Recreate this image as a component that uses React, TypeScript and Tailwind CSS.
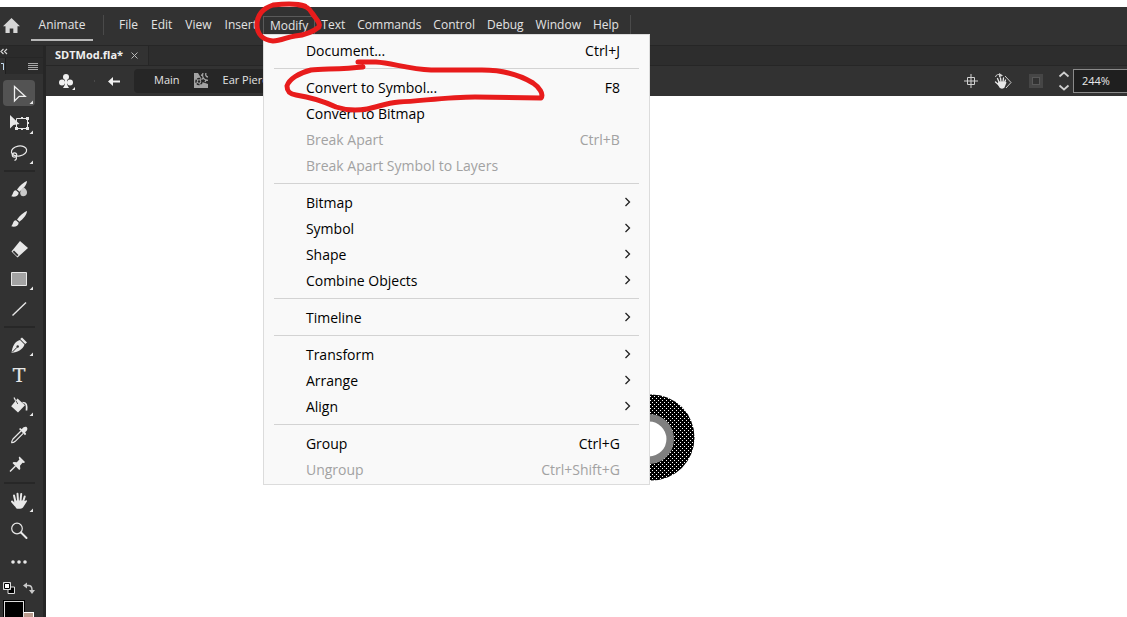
import { ReactNode } from "react"

type Entry = { label: string; keys?: string; sub?: boolean; disabled?: boolean }

const modifyMenu: Entry[][] = [
  [{ label: "Document...", keys: "Ctrl+J" }],
  [
    { label: "Convert to Symbol...", keys: "F8" },
    { label: "Convert to Bitmap" },
    { label: "Break Apart", keys: "Ctrl+B", disabled: true },
    { label: "Break Apart Symbol to Layers", disabled: true },
  ],
  [
    { label: "Bitmap", sub: true },
    { label: "Symbol", sub: true },
    { label: "Shape", sub: true },
    { label: "Combine Objects", sub: true },
  ],
  [{ label: "Timeline", sub: true }],
  [
    { label: "Transform", sub: true },
    { label: "Arrange", sub: true },
    { label: "Align", sub: true },
  ],
  [
    { label: "Group", keys: "Ctrl+G" },
    { label: "Ungroup", keys: "Ctrl+Shift+G", disabled: true },
  ],
]

type Tool = { name: string; icon: ReactNode; more?: boolean; selected?: boolean }

const brush = (
  <>
    <path d="M24 5c-3 1-7.500 5-10 8.500l2.500 2.200C20 13 24 8.500 24 5z" fill="#e8e8e8" />
    <path d="M13 14.300c-3 0-2.500 3.500-4.700 6 3.500 1 7.200-.3 7.400-3.600z" fill="#e8e8e8" />
  </>
)

const toolGroups: Tool[][] = [
  [
    {
      name: "Selection",
      more: true,
      selected: true,
      icon: <path d="M11.500 6.500v14.500l4.700-4.700h6z" fill="none" stroke="#f0f0f0" strokeWidth="1.300" />,
    },
    {
      name: "Free Transform",
      more: true,
      icon: (
        <>
          <path d="M13.500 8.500h11v10h-11z" fill="none" stroke="#e8e8e8" strokeWidth="1" />
          <path d="M12 17h3v3h-3zM23 17h3v3h-3zM23 7h3v3h-3zM18 7h2v2h-2zM18 18h2v2h-2zM24 12h2v2h-2z" fill="#e8e8e8" />
          <path d="M7 5v13.500l3.500-3.500 6-1z" fill="#e8e8e8" />
        </>
      ),
    },
    {
      name: "Lasso",
      more: true,
      icon: (
        <g fill="none" stroke="#e8e8e8" strokeWidth="1.200">
          <ellipse cx="16" cy="11" rx="7.700" ry="5" transform="rotate(-10 16 11)" />
          <circle cx="11.500" cy="15" r="2.200" />
          <path d="M13 16.500c1 1.500.5 3-1.500 4" />
        </g>
      ),
    },
  ],
  [
    {
      name: "Fluid Brush",
      icon: (
        <>
          {brush}
          <path d="M21 11.500c-3 1.500-5 5-3 8 2 1.700 5.500.5 6-2.500.2-2.500-1-4-3-5.500z" fill="#c9c9c9" />
        </>
      ),
    },
    { name: "Classic Brush", icon: brush },
    {
      name: "Eraser",
      icon: (
        <>
          <path d="M17 5l8 7-10.500 9.500-6-6z" fill="#e8e8e8" />
          <path d="M11 14.500l4.500 4.500-1.300 1.300-4.500-4.500z" fill="#323232" />
        </>
      ),
    },
    {
      name: "Rectangle",
      more: true,
      icon: <path d="M8.500 6.500h15v13h-15z" fill="#a3a3a3" stroke="#e8e8e8" strokeWidth="1" />,
    },
    { name: "Line", icon: <path d="M9.500 19.500l13.500-13" stroke="#e8e8e8" strokeWidth="1.400" /> },
  ],
  [
    {
      name: "Pen",
      more: true,
      icon: (
        <>
          <path d="M17 8l4.500 4.500c-1.500 5-6.500 7.500-13 8.500C9.300 14.500 11.500 9.500 17 8z" fill="#e8e8e8" />
          <path d="M19 5.500l5 5-1.800 1.500-5-5z" fill="#e8e8e8" />
          <path d="M9 20.500l5-5.200" stroke="#323232" strokeWidth="1" />
          <circle cx="14.700" cy="14.500" r="1.200" fill="#323232" />
        </>
      ),
    },
    {
      name: "Text",
      icon: (
        <text x="16" y="20" textAnchor="middle" fontFamily="DejaVu Serif, serif" fontSize="19" fill="#e8e8e8" stroke="#e8e8e8" strokeWidth=".2">
          T
        </text>
      ),
    },
    {
      name: "Paint Bucket",
      more: true,
      icon: (
        <>
          <path d="M14.500 6.500l7.500 6.800-7 7.200-6.800-6.300z" fill="#e8e8e8" />
          <path d="M14.500 12.500L11 5.500" stroke="#e8e8e8" strokeWidth="1.300" />
          <path d="M19.500 10.500c4 0 4.500 2.500 4 8" fill="none" stroke="#e8e8e8" strokeWidth="1.700" />
          <path d="M12.800 8.500l2 3.500" stroke="#323232" strokeWidth=".8" />
        </>
      ),
    },
    {
      name: "Eyedropper",
      icon: (
        <>
          <path d="M18 9l-8 8c-1 1.500-1.500 2.500-1.300 3.700 1.500 0 2.500-.5 3.500-1.400l8-8" fill="none" stroke="#e8e8e8" strokeWidth="1.200" />
          <path d="M16 7l1.300-1 1.500 1.200C20.500 5 22.500 4.300 23.800 5.300c1.200 1.300.5 3.400-1.700 5l1.100 1.700-1.200 1.200z" fill="#e8e8e8" />
        </>
      ),
    },
    {
      name: "Asset Warp",
      icon: (
        <>
          <path d="M16.500 4.500l5.500 5.500-1 1-1.500-.3-2.500 3 .3 3.300-1.100 1L9.500 11l1.100-1 3.200.2 2.600-2.700-.7-1.800z" fill="#e8e8e8" />
          <path d="M12.500 14L7 19.500" stroke="#e8e8e8" strokeWidth="1.500" />
        </>
      ),
    },
  ],
  [
    {
      name: "Hand",
      more: true,
      icon: (
        <>
          <g stroke="#e8e8e8" strokeWidth="2" strokeLinecap="round" fill="none">
            <path d="M12.500 14L11 7.500M15 13l-.5-7.200M17.500 13l.7-7M20 14l1.700-5.500M12.500 17.500L9 13.500" />
          </g>
          <path d="M11.500 12.500h9.300L21.500 13l2-.8c.8.300.7 1 .2 1.500L20 19.500c-.8 1.300-5.500 2-7 .5l-2-4z" fill="#e8e8e8" />
        </>
      ),
    },
    {
      name: "Zoom",
      icon: (
        <g fill="none" stroke="#e8e8e8">
          <circle cx="14" cy="10.500" r="5.300" strokeWidth="1.200" />
          <path d="M18 14.500l5.500 5.500" strokeWidth="2" strokeLinecap="round" />
        </g>
      ),
    },
    {
      name: "Edit Toolbar",
      icon: (
        <g fill="#e8e8e8">
          <circle cx="10" cy="14" r="1.800" />
          <circle cx="16" cy="14" r="1.800" />
          <circle cx="22" cy="14" r="1.800" />
        </g>
      ),
    },
  ],
]

function ToolButton({ name, icon, more, selected }: Tool) {
  return (
    <button aria-label={name} className={`block h-[26px] w-8 rounded ${selected ? "bg-[#535353]" : ""}`}>
      <svg width="32" height="26" viewBox="0 0 32 26">
        {icon}
        {more && <path d="M30 20.500v3.500h-3.500z" fill="#e8e8e8" />}
      </svg>
    </button>
  )
}

function ToolPanel() {
  return (
    <aside className="flex w-[46px] shrink-0 flex-col overflow-hidden border-r-[3px] border-[#262626] bg-[#323232]">
      <div className="flex h-[11px] shrink-0 items-center bg-[#2b2b2b]">
        <button aria-label="Collapse panel">
          <svg width="9" height="7" viewBox="0 0 9 7" fill="none" stroke="#d6d6d6" strokeWidth="1.200">
            <path d="M3.500 1L1 3.500 3.500 6M7 1L4.500 3.500 7 6" />
          </svg>
        </button>
      </div>
      <div className="flex h-[17px] shrink-0 items-center justify-between border-t border-[#262626] bg-[#2b2b2b] pr-1">
        <span className="flex h-4 w-[6px] items-center overflow-hidden border-r border-[#1f1f1f] bg-[#323232]">
          <svg width="5" height="9" viewBox="0 0 5 9"><path d="M1 1.500h2.500V8" fill="none" stroke="#c4dcf0" /></svg>
        </span>
        <button aria-label="Panel menu">
          <svg width="11" height="9" viewBox="0 0 11 9" stroke="#a8a8a8">
            <path d="M0 1.500h10M0 3.500h10M0 5.500h10M0 7.500h10" />
          </svg>
        </button>
      </div>
      <div className="mt-[6px] shrink-0">
        {toolGroups.map((tools, i) => (
          <div key={i}>
            {i > 0 && <div className="mr-2 ml-1 h-[10px] py-1"><div className="h-0.5 bg-[#272727]" /></div>}
            <div className="flex flex-col gap-1 pl-[3px]">
              {tools.map((tool) => (
                <ToolButton key={tool.name} {...tool} />
              ))}
            </div>
          </div>
        ))}
      </div>
      <div className="mt-2 flex shrink-0 gap-2 pl-[3px]">
        <button aria-label="Default colors">
          <svg width="12" height="12" viewBox="0 0 12 12">
            <path d="M5 5h6.500v6.500H5z" fill="#000" stroke="#ddd" />
            <path d="M.5.5h7v7h-7z" fill="#fff" stroke="#ddd" />
            <path d="M1.500 1.500h5v5h-5z" fill="#fff" stroke="#000" />
          </svg>
        </button>
        <button aria-label="Swap colors">
          <svg width="12" height="12" viewBox="0 0 12 12">
            <path d="M3 3.500h2.500C8 3.500 9 5 9 8" fill="none" stroke="#c9c9c9" strokeWidth="1.500" />
            <path d="M0 3.500L4 .5v6zM9 12L6 8h6z" fill="#c9c9c9" />
          </svg>
        </button>
      </div>
      <div className="mt-[7px] flex shrink-0 pl-1">
        <button aria-label="Stroke color" className="h-5 w-5 border border-[#ddd] bg-black outline outline-black" />
        <button aria-label="Fill color" className="mt-[11px] h-5 w-[10px] border border-l-0 border-white bg-[#b99a8c]" />
      </div>
    </aside>
  )
}

function ModifyMenu() {
  return (
    <div className="absolute top-full left-0 z-10 w-[387px] border border-[#dcdcdc] bg-[#f9f9f9] pt-[3px] pb-px text-black">
      {modifyMenu.map((group, i) => (
        <div key={i}>
          {i > 0 && <hr className="mx-[10px] mt-1 mb-[6px] border-[#d3d3d3]" />}
          {group.map((item) => (
            <button
              key={item.label}
              disabled={item.disabled}
              className={`flex h-[26px] w-full items-center justify-between pr-[29px] pb-0.5 pl-[42px] text-[14px] ${item.disabled ? "text-[#a2a2a2]" : ""}`}
            >
              <span>{item.label}</span>
              {item.keys && <span>{item.keys}</span>}
              {item.sub && (
                <svg width="7" height="10" viewBox="0 0 7 10" className="-mr-3" fill="none" stroke="#222" strokeWidth="1.300">
                  <path d="M.5 1l4 4-4 4" />
                </svg>
              )}
            </button>
          ))}
        </div>
      ))}
    </div>
  )
}

function MenuBar() {
  return (
    <header className="flex h-[39px] shrink-0 border-b border-[#262626] bg-[#323232] text-[12px] text-[#e3e3e3]">
      <button aria-label="Home" className="flex w-[31px] items-center pl-[3px]">
        <svg width="17" height="16" viewBox="0 0 17 16" fill="#d6d6d6">
          <path d="M8.500 0L17 8.200h-2.500V15h-4.200v-4.500H6.700V15H2.500V8.200H0z" />
        </svg>
      </button>
      <button className="mb-1 w-[62px] border-b-2 border-[#b8b8b8] pt-1">Animate</button>
      <div className="mt-2 ml-[10px] h-5 w-px bg-[#4a4a4a]" />
      <nav className="flex h-[27px] items-end pl-2">
        {["File", "Edit", "View", "Insert"].map((name) => (
          <button key={name} className="h-[18px] pr-[6px] pl-[7px]">{name}</button>
        ))}
        <div className="relative">
          <button className="block h-[18px] border border-b-0 border-[#5a5a5a] px-[6px] leading-[17px]">Modify</button>
          <ModifyMenu />
        </div>
        {["Text", "Commands", "Control", "Debug", "Window", "Help"].map((name) => (
          <button key={name} className="h-[18px] px-[6px]">{name}</button>
        ))}
      </nav>
      <div className="mt-2 ml-[5px] h-5 w-px bg-[#4a4a4a]" />
    </header>
  )
}

function EditBar() {
  return (
    <div className="flex h-[31px] shrink-0 items-center border-t border-[#262626] bg-[#323232] text-[11px] text-[#e3e3e3]">
      <button aria-label="Edit scene" className="ml-3">
        <svg width="17" height="17" viewBox="0 0 17 17" fill="#f0f0f0">
          <circle cx="8" cy="4" r="3" />
          <circle cx="4" cy="9.500" r="3" />
          <circle cx="12" cy="9.500" r="3" />
          <path d="M7 6h2v5.500L11 15H5l2-3.500zM17 14v3h-3z" />
        </svg>
      </button>
      <div className="ml-[19px] h-0.5 w-px bg-[#4a4a4a]" />
      <button aria-label="Back" className="ml-[13px]">
        <svg width="12" height="9" viewBox="0 0 12 9">
          <path d="M5 0v3.500h7v2H5V9L0 4.500z" fill="#f0f0f0" />
        </svg>
      </button>
      <div className="ml-[14px] flex h-6 w-[300px] items-center rounded-l bg-[#262626] pb-0.5 pl-5">
        <a href="#main">Main</a>
        <svg className="ml-[14px]" width="15" height="15" viewBox="0 0 15 15">
          <path d="M0 0h4l3 5 1 4 6 2v4H0z" fill="#a3a3a3" />
          <circle cx="5" cy="8.500" r="3" fill="#a3a3a3" stroke="#262626" strokeWidth="1.500" strokeDasharray="3 1" />
          <circle cx="5" cy="8.500" r="1.200" fill="#262626" />
          <path d="M9 0c-1 3 0 6 3 7l2 .3M7 2l2 .5M7.500 6.500l2-1.500M11 9l1-2M12 0c-.8 2 0 3.700 2 4" fill="none" stroke="#a3a3a3" strokeWidth="1.300" />
        </svg>
        <a href="#ear-piercing" className="ml-[14px]">Ear Piercing</a>
      </div>
      <div className="ml-auto flex items-center">
        <button aria-label="Center stage">
          <svg width="14" height="14" viewBox="0 0 14 14" fill="none" stroke="#d0d0d0">
            <path d="M3.500 3.500h7v7h-7zM7 0v14M0 7h14" />
          </svg>
        </button>
        <button aria-label="Rotate stage" className="ml-4">
          <svg width="19" height="17" viewBox="0 0 19 17">
            <path d="M11 3l6 6.500-5 5.500" fill="none" stroke="#d0d0d0" />
            <path d="M1.500 4C2 1.500 4.500 1 6.500 2" fill="none" stroke="#d0d0d0" />
            <path d="M5 0l4 2.500-4 2z" fill="#d0d0d0" />
            <path d="M5 9L3.500 5.500M7 9l-.5-4M9 9l.5-4M10.500 10l1-3M5 12L1.500 9" stroke="#e8e8e8" strokeWidth="1.300" strokeLinecap="round" />
            <path d="M4.500 8.500H11l1.500 1-2 5c-1 1.500-4 1.500-5 0L3.500 11z" fill="#e8e8e8" />
          </svg>
        </button>
        <button aria-label="Clip content" disabled className="ml-4">
          <svg width="14" height="14" viewBox="0 0 14 14" fill="none">
            <path d="M2 2h10v10H2z" stroke="#464646" strokeWidth="4" />
            <path d="M3.500 3.500h7v7h-7z" stroke="#6a6a6a" strokeDasharray="1 1" />
          </svg>
        </button>
        <button aria-label="Zoom presets" className="ml-[15px]">
          <svg width="12" height="20" viewBox="0 0 12 20" fill="none" stroke="#d0d0d0" strokeWidth="1.700">
            <path d="M1.500 5.500L6 1.500l4.500 4M1.500 14.500l4.500 4 4.500-4" />
          </svg>
        </button>
        <input
          aria-label="Zoom level"
          defaultValue="244%"
          className="ml-[3px] h-6 w-[54px] border border-r-0 border-[#8a8a8a] bg-[#1f1f1f] pb-0.5 pl-2 text-[11px] text-[#e8e8e8]"
        />
      </div>
    </div>
  )
}

function Stage() {
  return (
    <main className="relative flex-1 bg-white">
      <svg className="absolute top-[298px] left-[562px]" width="88" height="88" viewBox="0 0 88 88">
        <defs>
          <pattern id="dots" width="4" height="4" patternUnits="userSpaceOnUse">
            <path d="M0 0h4v4H0z" fill="#000" />
            <path d="M0 0h1v1H0zM2 2h1v1H2z" fill="#fff" />
          </pattern>
        </defs>
        <circle cx="43.500" cy="43.500" r="43" fill="url(#dots)" />
        <circle cx="41" cy="45" r="21.200" fill="#fff" stroke="#808080" strokeWidth="7.500" />
      </svg>
    </main>
  )
}

// Freehand marker strokes over the menu
function Markup() {
  return (
    <svg className="pointer-events-none absolute top-0 left-0 z-20" width="560" height="120" viewBox="0 0 560 120" fill="none" stroke="#e81c1c" strokeWidth="5" strokeLinecap="round" strokeLinejoin="round">
      <path d="M305 6C296 3 283 4 273 5C261 9 257 16 257 25C257 34 263 40 273 41C281 41 287 37 295 36C306 35 314 31 319 27C321 23 316 19 312 13C309 8 306 6 299 5" />
      <path d="M363 67C344 69 324 69 311 70C299 73 289 79 287 86C287 92 290 94 296 95C309 97 323 101 336 107C345 110 356 111 367 109C378 107 386 103 399 102C421 101 448 97 475 97L541 98C544 94 539 87 533 83C518 74 501 70 482 70L431 70C408 69 392 63 376 62L358 62" />
    </svg>
  )
}

export default function App() {
  return (
    <div className="relative flex h-screen flex-col overflow-hidden bg-white pt-[7px] font-['Open_Sans','Noto_Sans',sans-serif]">
      <MenuBar />
      <div className="flex min-h-0 flex-1">
        <ToolPanel />
        <div className="flex min-w-0 flex-1 flex-col">
          <div className="flex h-[19px] shrink-0 bg-[#2d2d2d]">
            <div className="flex items-center border-r border-[#262626] bg-[#323232] pr-[10px] pl-[9px] text-[11px] font-bold text-[#f0f0f0]">
              SDTMod.fla*
              <button aria-label="Close tab" className="ml-2">
                <svg width="7" height="7" viewBox="0 0 7 7" stroke="#b8b8b8">
                  <path d="M.5.5l6 6M6.500.5l-6 6" />
                </svg>
              </button>
            </div>
          </div>
          <EditBar />
          <Stage />
        </div>
      </div>
      <Markup />
    </div>
  )
}
